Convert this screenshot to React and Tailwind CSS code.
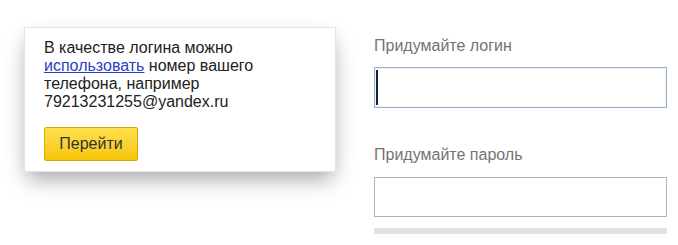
export default function App() {
    return (
        <div className="w-[678px] h-[245px] bg-white flex overflow-hidden font-['Liberation_Sans',Arial,sans-serif]">
            {/* Hint popup */}
            <div className="w-[350px] pl-[24px] pt-[27px]">
                <div className="w-[312px] h-[145px] bg-white border border-[#e3e3e3] shadow-[0_10px_20px_-3px_rgba(0,0,0,0.35)] pl-[19px] pt-[11px]">
                    <p className="text-[16px] leading-[18px] text-[#222]">
                        В качестве логина можно
                        <br />
                        <a href="#" className="text-[#2a3ec2] underline">использовать</a> номер вашего
                        <br />
                        телефона, например
                        <br />
                        79213231255@yandex.ru
                    </p>
                    <button className="mt-[16px] w-[94px] h-[34px] rounded-[2px] border border-[#d6ab00] bg-gradient-to-b from-[#ffe04a] to-[#f6c500] text-[16px] text-[#333]">
                        Перейти
                    </button>
                </div>
            </div>

            {/* Registration fields */}
            <div className="w-[293px] ml-[24px] pt-[37px]">
                <label className="block text-[16px] leading-[18px] text-[#737373]">Придумайте логин</label>
                <div className="mt-[12px] h-[41px] border border-[#9eb0c6] bg-[#fffffd] shadow-[inset_0_0_0_1px_#eef4fb] flex items-center pl-[1px]">
                    <div className="w-[2px] h-[35px] bg-[#1a1f33]" />
                </div>
                <label className="block mt-[38px] text-[16px] leading-[18px] text-[#737373]">Придумайте пароль</label>
                <div className="mt-[13px] h-[40px] border border-[#b3b3b3] bg-white" />
                <div className="mt-[11px] h-[6px] bg-[#e2e2e2]" />
            </div>
        </div>
    );
}
